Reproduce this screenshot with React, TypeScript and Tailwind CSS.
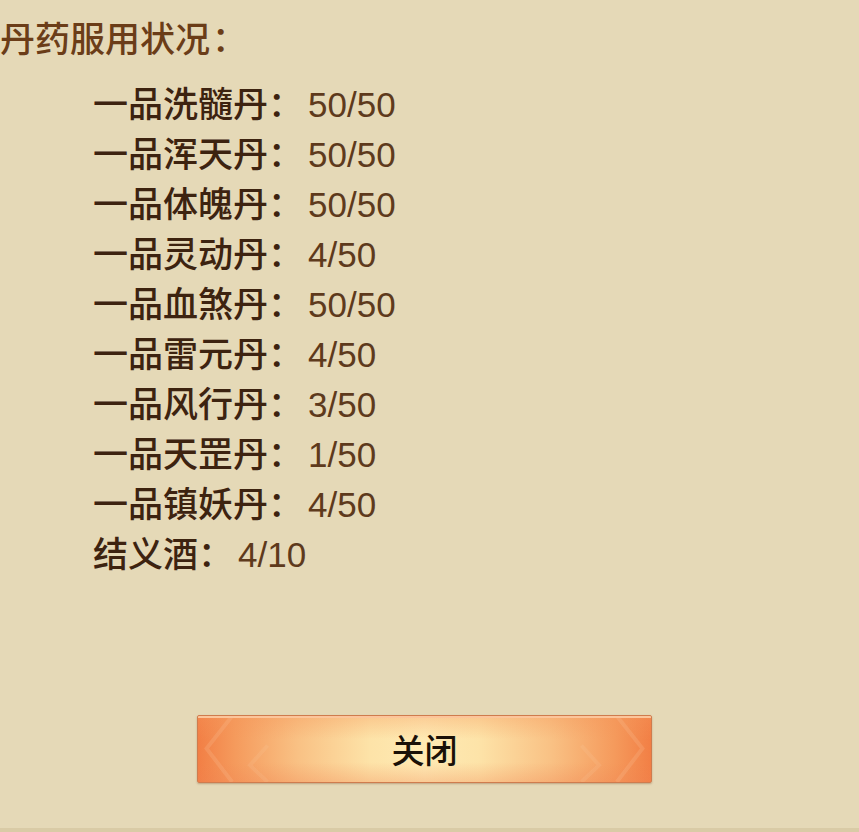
import React from "react"

const items = [
  { name: "一品洗髓丹", value: "50/50" },
  { name: "一品浑天丹", value: "50/50" },
  { name: "一品体魄丹", value: "50/50" },
  { name: "一品灵动丹", value: "4/50" },
  { name: "一品血煞丹", value: "50/50" },
  { name: "一品雷元丹", value: "4/50" },
  { name: "一品风行丹", value: "3/50" },
  { name: "一品天罡丹", value: "1/50" },
  { name: "一品镇妖丹", value: "4/50" },
  { name: "结义酒", value: "4/10" },
]

function CloseButton() {
  return (
    <button className="relative ml-[197px] mt-[135px] flex h-[68px] w-[455px] items-center justify-center overflow-hidden rounded-[2px] border border-[#cf7c4e] bg-[linear-gradient(90deg,#f27f45_0%,#f59a5c_8%,#f9c184_22%,#fde3a8_38%,#feeab4_50%,#fde3a8_62%,#f9c184_78%,#f59a5c_92%,#f27f45_100%)] shadow-[0_1px_2px_rgba(120,70,30,0.35)]">
      {/* vertical shading */}
      <div className="absolute inset-0 bg-[linear-gradient(180deg,rgba(245,150,90,0.35)_0%,rgba(255,240,200,0)_35%,rgba(255,240,200,0)_70%,rgba(240,130,80,0.3)_100%)]" />
      <div className="absolute inset-x-0 top-0 h-[2px] bg-[#fcc59a]" />
      {/* faint chevrons */}
      <svg className="absolute left-0 top-0 h-full w-[90px]" viewBox="0 0 90 67" fill="none">
        <path d="M34 0 L8 33 L34 67" stroke="#fbc49a" strokeOpacity="0.22" strokeWidth="4" />
        <path d="M70 30 L52 50 L70 67" stroke="#fbd0a8" strokeOpacity="0.15" strokeWidth="4" />
      </svg>
      <svg className="absolute right-0 top-0 h-full w-[90px]" viewBox="0 0 90 67" fill="none">
        <path d="M56 0 L82 33 L56 67" stroke="#fbc49a" strokeOpacity="0.22" strokeWidth="4" />
        <path d="M20 30 L38 50 L20 67" stroke="#fbd0a8" strokeOpacity="0.15" strokeWidth="4" />
      </svg>
      <span className="relative font-['Noto_Sans_CJK_SC',sans-serif] text-[33px] font-medium leading-none text-[#1a1108]">
        关闭
      </span>
    </button>
  )
}

export default function App() {
  return (
    <div className="relative flex h-[832px] w-[859px] flex-col overflow-hidden bg-[#e5d9b7] font-['Liberation_Sans','Noto_Sans_CJK_SC',sans-serif]">
      <div className="flex pt-[15px] text-[35px] font-medium leading-[50px] text-[#6b3d18]">
        <span>丹药服用状况</span>
        <span className="ml-[2px] inline-block w-[1em]">：</span>
      </div>

      <div className="mt-[15px] flex flex-col pl-[93px]">
        {items.map((item) => (
          <div key={item.name} className="flex h-[50px] items-center text-[35px] leading-[50px]">
            <span className="font-medium text-[#3d2310]">{item.name}</span>
            <span className="inline-block w-[1em] font-medium text-[#3d2310]">：</span>
            <span className="ml-[5px] text-[#5e3a1c]">{item.value}</span>
          </div>
        ))}
      </div>

      <CloseButton />

      <div className="absolute inset-x-0 bottom-0 h-[4px] bg-[#d9cba6]" />
    </div>
  )
}
